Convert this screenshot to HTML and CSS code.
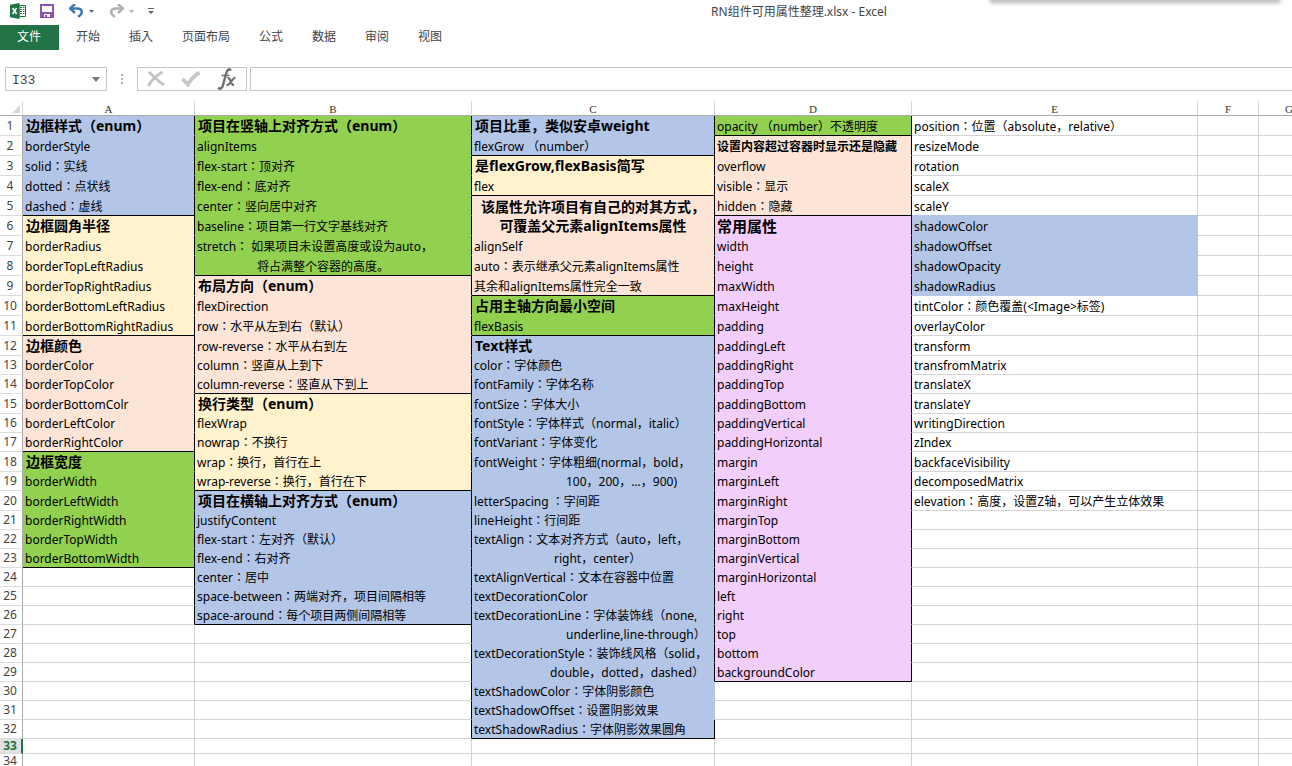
FILE: index.html
```html
<!DOCTYPE html>
<html lang="zh-CN">
<head>
<meta charset="utf-8">
<title>RN组件可用属性整理.xlsx - Excel</title>
<link rel="stylesheet" href="styles.css">
</head>
<body>
<div class="app">
  <header class="titlebar">
    <div class="quick">
      <svg class="logo" width="16" height="16" viewBox="0 0 16 16" aria-hidden="true">
        <path d="M9 2.5h6.5v11H9z" fill="#fff" stroke="#217346"/>
        <path d="M10 4.5h2M13 4.500h1.500M10 6.500h2M13 6.500h1.500M10 8.500h2M13 8.500h1.500M10 10.500h2M13 10.500h1.500" stroke="#217346"/>
        <path d="M0 1.800 9.500 0v16L0 14.200z" fill="#217346"/>
        <path d="M2.600 5l4 6M6.600 5l-4 6" stroke="#fff" stroke-width="1.600"/>
      </svg>
      <button class="tool save" aria-label="保存">
        <svg width="14" height="14" viewBox="0 0 14 14"><path d="M1 1h12v12H1z" fill="#fff" stroke="#8a54b0" stroke-width="2"/><path d="M1 8h12v5H1z" fill="#8a54b0"/><path d="M4 10h6v3H4z" fill="#fff"/><path d="M5 11h2v3H5z" fill="#8a54b0"/></svg>
      </button>
      <button class="tool undo" aria-label="撤消">
        <svg width="15" height="14" viewBox="0 0 15 14"><path d="M6 0 1 4.500 6 9M1.500 4.500H8c6 0 6.500 5.500 1 8.300" fill="none" stroke="#3e78b3" stroke-width="2.400"/></svg>
        <svg width="5" height="3" viewBox="0 0 5 3"><path d="M0 0h5L2.500 3z" fill="#666"/></svg>
      </button>
      <button class="tool redo" aria-label="恢复">
        <svg width="15" height="14" viewBox="0 0 15 14"><path d="M9 0l5 4.500L9 9M13.500 4.500H7c-6 0-6.500 5.500-1 8.300" fill="none" stroke="#b1b1b1" stroke-width="2.400"/></svg>
        <svg width="5" height="3" viewBox="0 0 5 3"><path d="M0 0h5L2.500 3z" fill="#b1b1b1"/></svg>
      </button>
      <button class="tool" aria-label="自定义快速访问工具栏">
        <svg width="6" height="7" viewBox="0 0 6 7"><path d="M0 0h6v1H0zM0 3h6L3 6z" fill="#666"/></svg>
      </button>
    </div>
    <h1 class="title">RN组件可用属性整理.xlsx - Excel</h1>
    <div class="flyout"></div>
  </header>

  <nav class="tabs">
    <button class="tab file">文件</button>
    <button class="tab">开始</button>
    <button class="tab">插入</button>
    <button class="tab">页面布局</button>
    <button class="tab">公式</button>
    <button class="tab">数据</button>
    <button class="tab">审阅</button>
    <button class="tab">视图</button>
  </nav>

  <div class="formula">
    <div class="namebox">
      <input class="name" value="I33" aria-label="名称框">
      <button class="drop" aria-label="展开名称框"><svg width="8" height="5" viewBox="0 0 8 5"><path d="M0 0h8L4 5z" fill="#777"/></svg></button>
    </div>
    <svg class="grip" width="3" height="10" viewBox="0 0 3 10" aria-hidden="true"><path d="M0 0h2v2H0zM0 4h2v2H0zM0 8h2v2H0z" fill="#b0b0b0"/></svg>
    <div class="actions">
      <button class="tool" aria-label="取消"><svg width="18" height="16" viewBox="0 0 18 16"><path d="M2 1C6 5 12 11 17 14M15.500 1C10 4 4 10 1.500 15" fill="none" stroke="#c3c3c3" stroke-width="2.900"/></svg></button>
      <button class="tool" aria-label="输入"><svg width="20" height="16" viewBox="0 0 20 16"><path d="M1.500 8 7 13.500C10 8 14 4 18.500 1.500" fill="none" stroke="#c6c6c6" stroke-width="3.800"/></svg></button>
      <button class="tool" aria-label="插入函数"><svg width="20" height="22" viewBox="0 0 20 22"><path d="M14 2.500C12 0 10 2 9 6L6 17c-.8 3.500-2.800 4.500-5 2.800" fill="none" stroke="#707070" stroke-width="2.500"/><path d="M4.500 7.500h8" stroke="#707070" stroke-width="1.500"/><path d="M10.500 10.500c3-2 3 7 6.500 6.500M18.500 9.500c-3 0-5.500 8.500-9 7.500" fill="none" stroke="#707070" stroke-width="2.200"/></svg></button>
    </div>
    <input class="entry" aria-label="编辑栏">
  </div>

  <main class="sheet">
    <table class="grid">
      <colgroup><col class="w-head"><col class="w-a"><col class="w-b"><col class="w-c"><col class="w-d"><col class="w-e"><col class="w-f"><col class="w-f"></colgroup>
      <thead>
        <tr class="short"><th class="corner"><svg width="8" height="8" viewBox="0 0 8 8" aria-hidden="true"><path d="M8 0v8H0z" fill="#dadada"/></svg></th><th>A</th><th>B</th><th>C</th><th>D</th><th>E</th><th>F</th><th>G</th></tr>
      </thead>
      <tbody>
        <tr class="tall"><th>1</th><td class="blue r t">边框样式（enum）</td><td class="green r t">项目在竖轴上对齐方式（enum）</td><td class="blue r t">项目比重，类似安卓weight</td><td class="green r b">opacity （number）不透明度</td><td>position：位置（absolute，relative）</td><td></td><td></td></tr>
        <tr class="tall"><th>2</th><td class="blue r">borderStyle</td><td class="green r">alignItems</td><td class="blue r b">flexGrow （number）</td><td class="peach r strong">设置内容超过容器时显示还是隐藏</td><td>resizeMode</td><td></td><td></td></tr>
        <tr class="tall"><th>3</th><td class="blue r">solid：实线</td><td class="green r">flex-start：顶对齐</td><td class="yellow r t">是flexGrow,flexBasis简写</td><td class="peach r">overflow</td><td>rotation</td><td></td><td></td></tr>
        <tr class="tall"><th>4</th><td class="blue r">dotted：点状线</td><td class="green r">flex-end：底对齐</td><td class="yellow r b">flex</td><td class="peach r">visible：显示</td><td>scaleX</td><td></td><td></td></tr>
        <tr class="tall"><th>5</th><td class="blue r b">dashed：虚线</td><td class="green r">center：竖向居中对齐</td><td class="peach r t merged" rowspan="2">该属性允许项目有自己的对其方式，<br>可覆盖父元素alignItems属性</td><td class="peach r b">hidden：隐藏</td><td class="over-blue">scaleY</td><td></td><td></td></tr>
        <tr class="tall"><th>6</th><td class="yellow r t">边框圆角半径</td><td class="green r">baseline：项目第一行文字基线对齐</td><td class="pink r t big">常用属性</td><td class="blue">shadowColor</td><td></td><td></td></tr>
        <tr class="tall"><th>7</th><td class="yellow r">borderRadius</td><td class="green r">stretch： 如果项目未设置高度或设为auto，</td><td class="peach r">alignSelf</td><td class="pink r">width</td><td class="blue">shadowOffset</td><td></td><td></td></tr>
        <tr class="tall"><th>8</th><td class="yellow r">borderTopLeftRadius</td><td class="green r b in-60">将占满整个容器的高度。</td><td class="peach r">auto：表示继承父元素alignItems属性</td><td class="pink r">height</td><td class="blue">shadowOpacity</td><td></td><td></td></tr>
        <tr class="tall"><th>9</th><td class="yellow r">borderTopRightRadius</td><td class="peach r t">布局方向（enum）</td><td class="peach r b">其余和alignItems属性完全一致</td><td class="pink r">maxWidth</td><td class="blue">shadowRadius</td><td></td><td></td></tr>
        <tr class="tall"><th>10</th><td class="yellow r">borderBottomLeftRadius</td><td class="peach r">flexDirection</td><td class="green r t">占用主轴方向最小空间</td><td class="pink r">maxHeight</td><td>tintColor：颜色覆盖(&lt;Image&gt;标签)</td><td></td><td></td></tr>
        <tr class="tall"><th>11</th><td class="yellow r b">borderBottomRightRadius</td><td class="peach r">row：水平从左到右（默认）</td><td class="green r b">flexBasis</td><td class="pink r">padding</td><td>overlayColor</td><td></td><td></td></tr>
        <tr class="tall"><th>12</th><td class="peach r t">边框颜色</td><td class="peach r">row-reverse：水平从右到左</td><td class="blue r t">Text样式</td><td class="pink r">paddingLeft</td><td>transform</td><td></td><td></td></tr>
        <tr><th>13</th><td class="peach r">borderColor</td><td class="peach r">column：竖直从上到下</td><td class="blue r">color：字体颜色</td><td class="pink r">paddingRight</td><td>transfromMatrix</td><td></td><td></td></tr>
        <tr><th>14</th><td class="peach r">borderTopColor</td><td class="peach r b">column-reverse：竖直从下到上</td><td class="blue r">fontFamily：字体名称</td><td class="pink r">paddingTop</td><td>translateX</td><td></td><td></td></tr>
        <tr class="tall"><th>15</th><td class="peach r">borderBottomColr</td><td class="yellow r t">换行类型（enum）</td><td class="blue r">fontSize：字体大小</td><td class="pink r">paddingBottom</td><td>translateY</td><td></td><td></td></tr>
        <tr><th>16</th><td class="peach r">borderLeftColor</td><td class="yellow r">flexWrap</td><td class="blue r">fontStyle：字体样式（normal，italic）</td><td class="pink r">paddingVertical</td><td>writingDirection</td><td></td><td></td></tr>
        <tr><th>17</th><td class="peach r b">borderRightColor</td><td class="yellow r">nowrap：不换行</td><td class="blue r">fontVariant：字体变化</td><td class="pink r">paddingHorizontal</td><td>zIndex</td><td></td><td></td></tr>
        <tr class="tall"><th>18</th><td class="green r t">边框宽度</td><td class="yellow r">wrap：换行，首行在上</td><td class="blue r">fontWeight：字体粗细(normal，bold，</td><td class="pink r">margin</td><td>backfaceVisibility</td><td></td><td></td></tr>
        <tr><th>19</th><td class="green r">borderWidth</td><td class="yellow r b">wrap-reverse：换行，首行在下</td><td class="blue r in-92">100，200，...，900)</td><td class="pink r">marginLeft</td><td>decomposedMatrix</td><td></td><td></td></tr>
        <tr class="tall"><th>20</th><td class="green r">borderLeftWidth</td><td class="blue r t">项目在横轴上对齐方式（enum）</td><td class="blue r">letterSpacing ：字间距</td><td class="pink r">marginRight</td><td>elevation：高度，设置Z轴，可以产生立体效果</td><td></td><td></td></tr>
        <tr><th>21</th><td class="green r">borderRightWidth</td><td class="blue r">justifyContent</td><td class="blue r">lineHeight：行间距</td><td class="pink r">marginTop</td><td></td><td></td><td></td></tr>
        <tr><th>22</th><td class="green r">borderTopWidth</td><td class="blue r">flex-start：左对齐（默认）</td><td class="blue r">textAlign：文本对齐方式（auto，left，</td><td class="pink r">marginBottom</td><td></td><td></td><td></td></tr>
        <tr><th>23</th><td class="green r b">borderBottomWidth</td><td class="blue r">flex-end：右对齐</td><td class="blue r in-80">right，center）</td><td class="pink r">marginVertical</td><td></td><td></td><td></td></tr>
        <tr><th>24</th><td class="r"></td><td class="blue r">center：居中</td><td class="blue r">textAlignVertical：文本在容器中位置</td><td class="pink r">marginHorizontal</td><td></td><td></td><td></td></tr>
        <tr><th>25</th><td class="r"></td><td class="blue r">space-between：两端对齐，项目间隔相等</td><td class="blue r">textDecorationColor</td><td class="pink r">left</td><td></td><td></td><td></td></tr>
        <tr><th>26</th><td class="r"></td><td class="blue r b">space-around：每个项目两侧间隔相等</td><td class="blue r">textDecorationLine：字体装饰线（none,</td><td class="pink r">right</td><td></td><td></td><td></td></tr>
        <tr><th>27</th><td></td><td class="r"></td><td class="blue r in-92">underline,line-through）</td><td class="pink r">top</td><td></td><td></td><td></td></tr>
        <tr><th>28</th><td></td><td class="r"></td><td class="blue r">textDecorationStyle：装饰线风格（solid，</td><td class="pink r">bottom</td><td></td><td></td><td></td></tr>
        <tr><th>29</th><td></td><td class="r"></td><td class="blue r in-76">double，dotted，dashed）</td><td class="pink r b">backgroundColor</td><td></td><td></td><td></td></tr>
        <tr><th>30</th><td></td><td class="r"></td><td class="blue">textShadowColor：字体阴影颜色</td><td></td><td></td><td></td><td></td></tr>
        <tr><th>31</th><td></td><td class="r"></td><td class="blue">textShadowOffset：设置阴影效果</td><td></td><td></td><td></td><td></td></tr>
        <tr><th>32</th><td></td><td class="r"></td><td class="blue r b">textShadowRadius：字体阴影效果圆角</td><td></td><td></td><td></td><td></td></tr>
        <tr class="short"><th class="active">33</th><td></td><td></td><td></td><td></td><td></td><td></td><td></td></tr>
        <tr><th class="last">34</th><td></td><td></td><td></td><td></td><td></td><td></td><td></td></tr>
      </tbody>
    </table>
  </main>
</div>
</body>
</html>
```
FILE: styles.css
```css
* { box-sizing: border-box; }

body {
  margin: 0;
  background: #fff;
  color: #000;
  font: 12px/14px "Noto Sans", "Noto Sans CJK JP", "Noto Sans CJK SC", sans-serif;
  font-feature-settings: "locl" 0;
}

button, input {
  margin: 0;
  padding: 0;
  border: 0;
  background: none;
  color: inherit;
  font: inherit;
  font-feature-settings: inherit;
}

svg { display: block; flex: none; }

.app {
  display: flex;
  flex-direction: column;
  height: 100vh;
  overflow: hidden;
}

/* Title bar */
.titlebar {
  position: relative;
  display: flex;
  align-items: flex-start;
  height: 25px;
  flex: none;
}
.quick {
  display: flex;
  align-items: center;
  width: 306px;
  height: 22px;
  padding-left: 10px;
}
.tool { display: flex; align-items: center; gap: 5px; }
.save { margin: 0 15px 0 14px; }
.redo { margin: 0 14px 0 15px; }
.title {
  flex: 1;
  margin: 0;
  color: #444;
  font-size: 12px;
  font-weight: 400;
  line-height: 24px;
  text-align: center;
}
.flyout {
  position: absolute;
  top: -6px;
  right: 13px;
  width: 288px;
  height: 7px;
  background: #c4c4c4;
  box-shadow: 0 1px 4px 1px #b8b8b8;
}

/* Ribbon tabs */
.tabs {
  display: flex;
  flex: none;
  gap: 29px;
  height: 42px;
  color: #444;
}
.tab { height: 25px; padding-bottom: 2px; white-space: nowrap; }
.file { padding: 0 18px 2px 17px; margin-right: -12px; background: #217346; color: #fff; }

/* Formula bar */
.formula {
  display: flex;
  flex: none;
  height: 34px;
  padding-left: 5px;
}
.namebox, .actions, .entry { height: 24px; border: 1px solid #c6c6c6; }
.namebox { display: flex; width: 102px; }
.name {
  flex: 1;
  min-width: 0;
  padding: 3px 0 0 6px;
  color: #444;
  font: 13px/16px "Liberation Mono", monospace;
}
.drop { padding: 0 6px; }
.grip { margin: 7px 12px 0 14px; }
.actions {
  display: flex;
  align-items: center;
  justify-content: space-between;
  width: 110px;
  padding: 0 9px;
  margin: 0 3px 0 1px;
}
.entry { flex: 1; min-width: 0; padding: 0 6px; border-right: 0; }

/* Worksheet */
.sheet { flex: 1; min-height: 0; overflow: hidden; }
.grid {
  width: 1320px;
  table-layout: fixed;
  border-collapse: separate;
  border-spacing: 0;
}
.w-head { width: 23px; }
.w-a { width: 172px; }
.w-b { width: 277px; }
.w-c { width: 243px; }
.w-d { width: 197px; }
.w-e { width: 286px; }
.w-f { width: 61px; }

tr { height: 19px; }
.tall { height: 20px; }
.short { height: 15px; }

thead th {
  padding: 2px 0 0;
  border-right: 1px solid #d8d8d8;
  border-bottom: 1px solid #ababab;
  color: #333;
  font: 11px/12px "Liberation Serif", serif;
}
.corner svg { margin-left: 12px; }

tbody th {
  padding: 0 2px 0 0;
  border-right: 1px solid #ababab;
  border-bottom: 1px solid #dcdcdc;
  color: #444;
  font-weight: 400;
}
tbody .active {
  padding-right: 1px;
  border-right: 2px solid #217346;
  background: #e1e1e1;
  color: #217346;
  font-weight: 700;
}
.last { vertical-align: top; }

td {
  padding: 2px 0 0 2px;
  border-right: 1px solid #d4d4d4;
  border-bottom: 1px solid #d4d4d4;
  white-space: nowrap;
}
.short td { padding: 0; }
.blue { background: #b4c6e7; border-color: #b4c6e7; }
.green { background: #92d050; border-color: #92d050; }
.yellow { background: #fff2cc; border-color: #fff2cc; }
.peach { background: #fce4d6; border-color: #fce4d6; }
.pink { background: #f2cefa; border-color: #f2cefa; }
.over-blue { border-bottom-color: #b4c6e7; }
.r { border-right-color: #000; }
.b { border-bottom-color: #000; }

.t { padding: 0 0 0 3px; font-size: 14px; font-weight: 700; }
.strong { font-weight: 700; }
.big { padding-left: 2px; font-size: 15px; }
.merged { padding: 0; line-height: 19px; text-align: center; }
.in-60 { padding-left: 62px; }
.in-76 { padding-left: 78px; }
.in-80 { padding-left: 82px; }
.in-92 { padding-left: 94px; }
```
